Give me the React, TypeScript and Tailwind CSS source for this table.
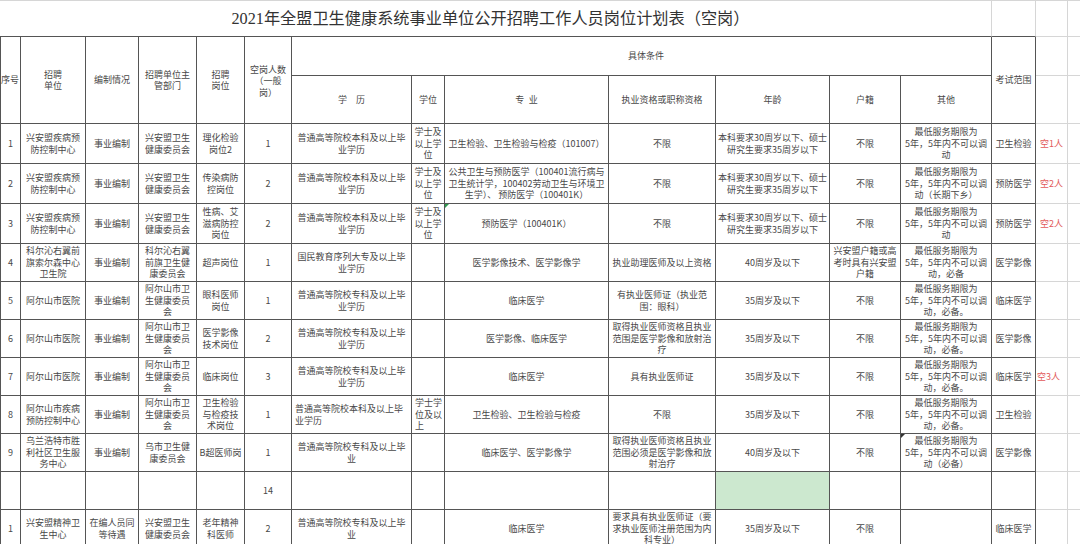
import React from "react";

const DARK = "border-[#555555]";

type Row = {
  cells: string[];
  note?: string;
  noteLeft?: boolean;
  leftCols?: number[];
  green?: number;
  markGreen?: number;
  markDark?: number;
};

const rows: Row[] = [
  {
    cells: ["1", "兴安盟疾病预\n防控制中心", "事业编制", "兴安盟卫生\n健康委员会", "理化检验\n岗位2", "1", "普通高等院校本科及以上毕\n业学历", "学士及\n以上学\n位", "卫生检验、卫生检验与检疫（101007）", "不限", "本科要求30周岁以下、硕士\n研究生要求35周岁以下", "不限", "最低服务期限为\n5年，5年内不可以调\n动", "卫生检验"],
    note: "空1人",
  },
  {
    cells: ["2", "兴安盟疾病预\n防控制中心", "事业编制", "兴安盟卫生\n健康委员会", "传染病防\n控岗位", "2", "普通高等院校本科及以上毕\n业学历", "学士及\n以上学\n位", "公共卫生与预防医学（100401流行病与\n卫生统计学，100402劳动卫生与环境卫\n生学）、 预防医学（100401K）", "不限", "本科要求30周岁以下、硕士\n研究生要求35周岁以下", "不限", "最低服务期限为\n5年，5年内不可以调\n动（长期下乡）", "预防医学"],
    note: "空2人",
  },
  {
    cells: ["3", "兴安盟疾病预\n防控制中心", "事业编制", "兴安盟卫生\n健康委员会", "性病、艾\n滋病防控\n岗位", "2", "普通高等院校本科及以上毕\n业学历", "学士及\n以上学\n位", "预防医学（100401K）", "不限", "本科要求30周岁以下、硕士\n研究生要求35周岁以下", "不限", "最低服务期限为\n5年，5年内不可以调\n动", "预防医学"],
    note: "空2人",
    markGreen: 8,
  },
  {
    cells: ["4", "科尔沁右翼前\n旗索尔森中心\n卫生院", "事业编制", "科尔沁右翼\n前旗卫生健\n康委员会", "超声岗位", "1", "国民教育序列大专及以上毕\n业学历", "", "医学影像技术、医学影像学", "执业助理医师及以上资格", "40周岁及以下", "兴安盟户籍或高\n考时具有兴安盟\n户籍", "最低服务期限为\n5年，5年内不可以调\n动，必备", "医学影像"],
  },
  {
    cells: ["5", "阿尔山市医院", "事业编制", "阿尔山市卫\n生健康委员\n会", "眼科医师\n岗位", "1", "普通高等院校专科及以上毕\n业学历", "", "临床医学", "有执业医师证（执业范\n围：眼科）", "35周岁及以下", "不限", "最低服务期限为\n5年，5年内不可以调\n动，必备。", "临床医学"],
  },
  {
    cells: ["6", "阿尔山市医院", "事业编制", "阿尔山市卫\n生健康委员\n会", "医学影像\n技术岗位", "2", "普通高等院校专科及以上毕\n业学历", "", "医学影像、临床医学", "取得执业医师资格且执业\n范围是医学影像和放射治\n疗", "35周岁及以下", "不限", "最低服务期限为\n5年，5年内不可以调\n动，必备。", "医学影像"],
  },
  {
    cells: ["7", "阿尔山市医院", "事业编制", "阿尔山市卫\n生健康委员\n会", "临床岗位", "3", "普通高等院校专科及以上毕\n业学历", "", "临床医学", "具有执业医师证", "35周岁及以下", "不限", "最低服务期限为\n5年，5年内不可以调\n动，必备。", "临床医学"],
    note: "空3人",
    noteLeft: true,
  },
  {
    cells: ["8", "阿尔山市疾病\n预防控制中心", "事业编制", "阿尔山市卫\n生健康委员\n会", "卫生检验\n与检疫技\n术岗位", "1", "普通高等院校本科及以上毕\n业学历", "学士学\n位及以\n上", "卫生检验、卫生检验与检疫", "不限", "35周岁及以下", "不限", "最低服务期限为\n5年，5年内不可以调\n动，必备。", "卫生检验"],
    leftCols: [6, 7],
  },
  {
    cells: ["9", "乌兰浩特市胜\n利社区卫生服\n务中心", "事业编制", "乌市卫生健\n康委员会", "B超医师岗", "1", "普通高等院校专科及以上毕\n业", "", "临床医学、医学影像学", "取得执业医师资格且执业\n范围必须是医学影像和放\n射治疗", "40周岁及以下", "不限", "最低服务期限为\n5年，5年内不可以调\n动（必备）", "医学影像"],
    markDark: 12,
  },
  {
    cells: ["", "", "", "", "", "14", "", "", "", "", "", "", "", ""],
    green: 10,
  },
  {
    cells: ["1", "兴安盟精神卫\n生中心", "在编人员同\n等待遇", "兴安盟卫生\n健康委员会", "老年精神\n科医师", "2", "普通高等院校专科及以上毕\n业", "", "临床医学", "要求具有执业医师证（要\n求执业医师注册范围为内\n科专业）", "35周岁及以下", "不限", "", "临床医学"],
  },
];

function Cell({
  children,
  className = "",
  first = false,
}: {
  children?: React.ReactNode;
  className?: string;
  first?: boolean;
}) {
  return (
    <div
      className={`relative flex items-center justify-center text-center whitespace-pre-line border-r border-b ${DARK} ${first ? "border-l" : ""} px-[1px] overflow-hidden ${className}`}
    >
      {children}
    </div>
  );
}

function Light({ children, className = "" }: { children?: React.ReactNode; className?: string }) {
  return (
    <div className={`flex items-center border-r border-b border-[#d6d6d6] overflow-hidden whitespace-nowrap ${className}`}>
      {children}
    </div>
  );
}

export default function App() {
  return (
    <div className="w-[1080px] h-[544px] overflow-hidden bg-white">
      <div className="grid grid-cols-[21px_65px_53px_58px_48px_47px_120px_33px_164px_107px_114px_71px_91px_44px_32px_13px] grid-rows-[37px_39px_48px_40px_40px_40px_38px_38px_38px_38px_38px_38px_38px_38px] font-['Noto_Sans_CJK_SC',sans-serif] text-[9px] leading-[11.5px] text-[#484848]">
        {/* Title row */}
        <div className={`col-span-13 flex items-center justify-center pr-[10px] pt-[2px] border-t border-t-[#d6d6d6] border-r border-r-[#d6d6d6] border-b ${DARK}`}>
          <span className="font-['Liberation_Serif','Noto_Sans_CJK_SC',serif] text-[16.2px] leading-none text-[#333333] whitespace-nowrap">
            2021年全盟卫生健康系统事业单位公开招聘工作人员岗位计划表（空岗）
          </span>
        </div>
        <div className={`border-t border-t-[#d6d6d6] border-r border-r-[#d6d6d6] border-b ${DARK}`} />
        <Light className="border-t border-t-[#d6d6d6]" />
        <Light className="border-t border-t-[#d6d6d6]" />

        {/* Header row 1 */}
        <Cell first className="row-span-2 px-0 whitespace-nowrap">
          <span className="whitespace-nowrap -ml-[1px]">序号</span>
        </Cell>
        <Cell className="row-span-2">{"招聘\n单位"}</Cell>
        <Cell className="row-span-2">编制情况</Cell>
        <Cell className="row-span-2">{"招聘单位主\n管部门"}</Cell>
        <Cell className="row-span-2">{"招聘\n岗位"}</Cell>
        <Cell className="row-span-2 pt-[2px]">{"空岗人数\n（一般\n岗）"}</Cell>
        <Cell className="col-span-7 pl-[10px]">具体条件</Cell>
        <Cell className="row-span-2">考试范围</Cell>
        <Light />
        <Light />

        {/* Header row 2 */}
        <Cell>{"学\u2002\u2002历"}</Cell>
        <Cell>学位</Cell>
        <Cell>{"专\u2002业"}</Cell>
        <Cell>执业资格或职称资格</Cell>
        <Cell>年龄</Cell>
        <Cell>户籍</Cell>
        <Cell>其他</Cell>
        <Light />
        <Light />

        {rows.map((r, ri) => (
          <React.Fragment key={ri}>
            {r.cells.map((t, ci) => {
              const left = r.leftCols?.includes(ci);
              const green = r.green === ci;
              return (
                <Cell
                  key={ci}
                  first={ci === 0}
                  className={`${left ? "justify-start text-left pl-[3px]" : ""} ${green ? "bg-[#cce8cf]" : ""}`}
                >
                  {r.markGreen === ci && (
                    <span className="absolute left-0 top-0 w-0 h-0 border-t-[4px] border-r-[4px] border-t-[#2f9a4f] border-r-transparent" />
                  )}
                  {r.markDark === ci && (
                    <span className="absolute left-0 top-0 w-0 h-0 border-t-[4px] border-r-[4px] border-t-[#333333] border-r-transparent" />
                  )}
                  {t}
                </Cell>
              );
            })}
            <Light className={r.noteLeft ? "justify-start pl-[1px]" : "justify-center"}>
              {r.note && <span className="text-[#e25a5a]">{r.note}</span>}
            </Light>
            <Light />
          </React.Fragment>
        ))}
      </div>
    </div>
  );
}
